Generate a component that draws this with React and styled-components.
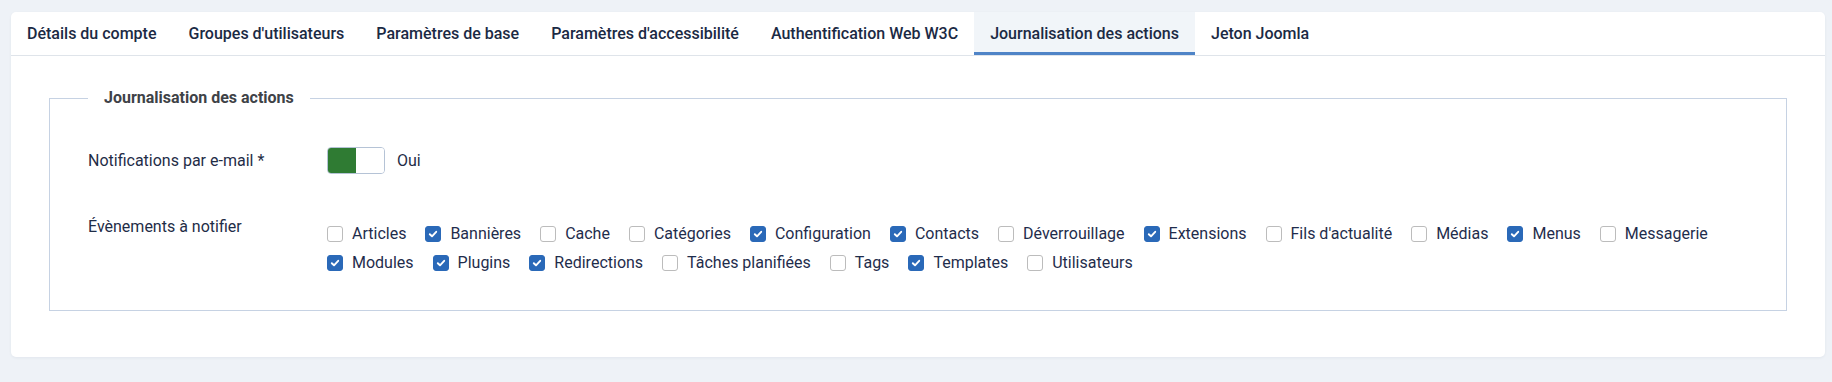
import React from 'react'
import styled, { createGlobalStyle } from 'styled-components'

const GlobalStyle = createGlobalStyle`
  html, body {
    margin: 0;
    padding: 0;
    background: #eef2f7;
    font-family: Roboto, "Noto Sans", sans-serif;
  }
`

const Page = styled.div`
  padding: 12px 7px 25px 11px;
`

const Card = styled.div`
  width: 1814px;
  background: #fff;
  border-radius: 5px;
  box-shadow: 0 1px 3px rgba(30, 50, 90, 0.06);
  overflow: hidden;
`

const TabBar = styled.div`
  display: flex;
  border-bottom: 1px solid #dfe4ea;
`

const Tab = styled.button`
  display: flex;
  align-items: center;
  height: 43px;
  padding: 0 16px;
  border: 0;
  margin: 0;
  font-family: Roboto, sans-serif;
  font-size: 16px;
  font-weight: 500;
  color: #1b2a44;
  background: ${({ active }) => (active ? '#f1f5f9' : 'transparent')};
  box-shadow: ${({ active }) => (active ? 'inset 0 -3px 0 #4f84c7' : 'none')};
  cursor: pointer;
`

const Panel = styled.div`
  padding: 30px 38px 46px 38px;
`

const Fieldset = styled.fieldset`
  margin: 0;
  padding: 37px 38px 35px 38px;
  border: 1px solid #c6d2e3;
  min-width: 0;
`

const Legend = styled.legend`
  padding: 0 16px;
  font-size: 16px;
  line-height: 24px;
  font-weight: 700;
  color: #3e4247;
`

const ControlGroup = styled.div`
  display: flex;
  align-items: ${({ top }) => (top ? 'flex-start' : 'center')};
  & + & {
    margin-top: 41px;
  }
`

const ControlLabel = styled.label`
  width: 239px;
  flex-shrink: 0;
  font-size: 16px;
  line-height: 24px;
  color: #1f2d47;
`

const Controls = styled.div`
  display: flex;
  align-items: center;
  gap: 12px;
`

const Switch = styled.span`
  display: flex;
  width: 58px;
  height: 27px;
  box-sizing: border-box;
  border: 1px solid #b5c3d6;
  border-radius: 4px;
  overflow: hidden;
`

const SwitchHalf = styled.span`
  flex: 1;
  background: ${({ on }) => (on ? '#2f7b33' : '#fff')};
`

const SwitchText = styled.span`
  font-size: 16px;
  line-height: 24px;
  color: #1f2d47;
`

const CheckGroup = styled.div`
  display: flex;
  flex-direction: column;
  gap: 5px;
  padding-top: 7px;
`

const CheckRow = styled.div`
  display: flex;
`

const CheckItem = styled.label`
  display: flex;
  align-items: center;
  gap: 9px;
  margin-right: 19px;
  font-size: 16px;
  line-height: 24px;
  color: #1f2d4c;
`

const Box = styled.span`
  display: flex;
  align-items: center;
  justify-content: center;
  width: 16px;
  height: 16px;
  box-sizing: border-box;
  border-radius: 3px;
  border: 1px solid ${({ checked }) => (checked ? '#2a69b8' : '#bcbcbc')};
  background: ${({ checked }) => (checked ? '#2a69b8' : '#fff')};
`

const tabs = [
  'Détails du compte',
  "Groupes d'utilisateurs",
  'Paramètres de base',
  "Paramètres d'accessibilité",
  'Authentification Web W3C',
  'Journalisation des actions',
  'Jeton Joomla',
]

const rows = [
  [
    ['Articles', false],
    ['Bannières', true],
    ['Cache', false],
    ['Catégories', false],
    ['Configuration', true],
    ['Contacts', true],
    ['Déverrouillage', false],
    ['Extensions', true],
    ["Fils d'actualité", false],
    ['Médias', false],
    ['Menus', true],
    ['Messagerie', false],
  ],
  [
    ['Modules', true],
    ['Plugins', true],
    ['Redirections', true],
    ['Tâches planifiées', false],
    ['Tags', false],
    ['Templates', true],
    ['Utilisateurs', false],
  ],
]

const Check = ({ label, checked }) => (
  <CheckItem>
    <Box checked={checked}>
      {checked && (
        <svg width="10" height="10" viewBox="0 0 10 10">
          <path d="M1.8 5.2 L4 7.3 L8.2 2.8" fill="none" stroke="#fff" strokeWidth="1.9" strokeLinecap="round" strokeLinejoin="round" />
        </svg>
      )}
    </Box>
    {label}
  </CheckItem>
)

export default function App() {
  return (
    <Page>
      <GlobalStyle />
      <Card>
        <TabBar>
          {tabs.map((t) => (
            <Tab key={t} active={t === 'Journalisation des actions'}>
              {t}
            </Tab>
          ))}
        </TabBar>
        <Panel>
          <Fieldset>
            <Legend>Journalisation des actions</Legend>
            <ControlGroup>
              <ControlLabel>Notifications par e-mail *</ControlLabel>
              <Controls>
                <Switch>
                  <SwitchHalf on />
                  <SwitchHalf />
                </Switch>
                <SwitchText>Oui</SwitchText>
              </Controls>
            </ControlGroup>
            <ControlGroup top>
              <ControlLabel>Évènements à notifier</ControlLabel>
              <CheckGroup>
                {rows.map((row, i) => (
                  <CheckRow key={i}>
                    {row.map(([label, checked]) => (
                      <Check key={label} label={label} checked={checked} />
                    ))}
                  </CheckRow>
                ))}
              </CheckGroup>
            </ControlGroup>
          </Fieldset>
        </Panel>
      </Card>
    </Page>
  )
}
